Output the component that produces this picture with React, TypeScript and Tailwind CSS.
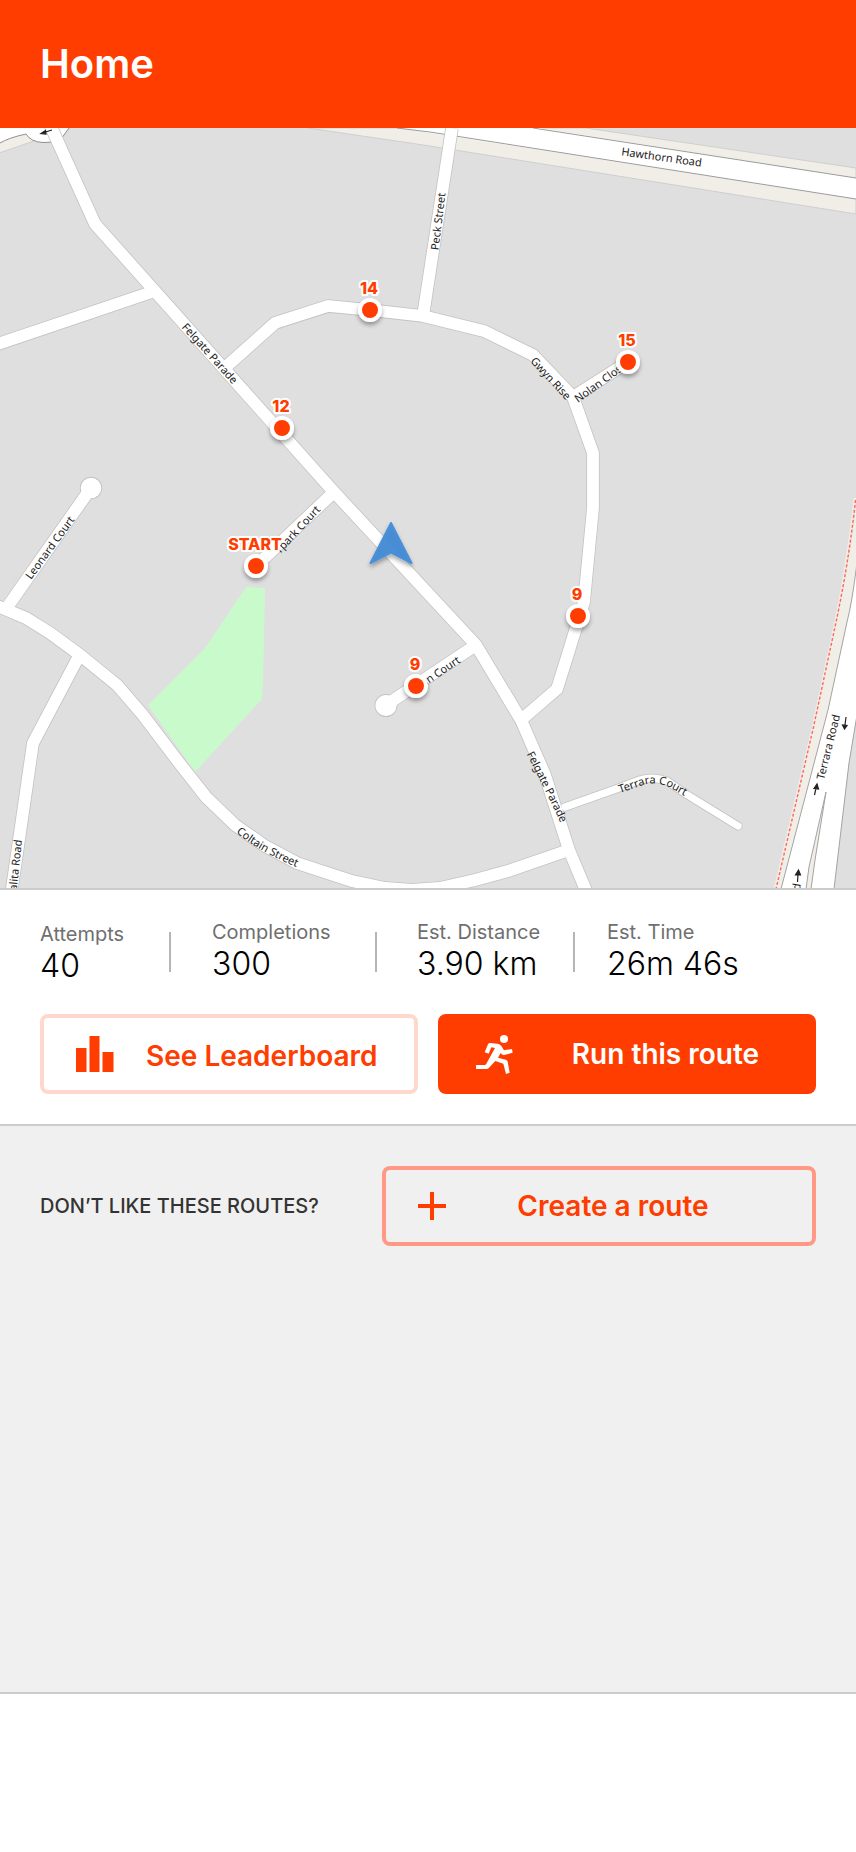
import { MdAdd } from "react-icons/md";

type Pin = { x: number; y: number; label: string };

const pins: Pin[] = [
  { x: 370, y: 310, label: "14" },
  { x: 628, y: 362, label: "15" },
  { x: 282, y: 428, label: "12" },
  { x: 256, y: 566, label: "START" },
  { x: 578, y: 616, label: "9" },
  { x: 416, y: 686, label: "9" },
];

const roads: string[] = [
  "M48 120 L57 140 L95 224 L334 492 L476 645 L521 720 L545 775 L569 850 L590 900",
  "M152 292 L-5 345",
  "M228 365 L275 323 L328 306 L370 310 L423 316 L484 331 L533 355 L573 397 L593 453 L593 508 L584 602 L567 657 L557 689 L521 720",
  "M452 128 L423 316",
  "M573 397 L628 362",
  "M334 492 L256 566",
  "M8 606 L91 488",
  "M-5 605 L26 618 L50 633 L80 655 L117 685 L142 714 L180 764 L206 797 L235 825 L265 846 L297 863 L352 881 L385 888 L412 890 L440 888 L475 880 L508 871 L569 850",
  "M79 656 L33 743 L11 895",
  "M476 645 L386 705",
];

const courtRoad = "M565 807 L616 789 L640 780 Q653 776 667 781 L686 794 L738 826";

function StreetMap() {
  return (
    <svg
      viewBox="0 128 856 760"
      className="block w-full bg-[#dfdfdf]"
      role="img"
      aria-label="Route map"
    >
      <defs>
        <filter id="pin-shadow" x="-50%" y="-50%" width="200%" height="220%">
          <feDropShadow dx="0" dy="3" stdDeviation="2" floodColor="#000" floodOpacity="0.35" />
        </filter>
        <path id="coltain" d="M234 831 Q261 853 299 868" />
        <path id="terrara-court" d="M614 795 L640 786 Q653 781 667 786 L690 799" />
        <path id="felgate-south" d="M525 751 Q547 793 562 826" />
      </defs>

      {/* Hawthorn Road with its verges */}
      <path d="M308 128 L586 128 L856 168 L856 214 L430 146Z" fill="#f1eee8" stroke="#cfcfcf" />
      <path d="M397 127 L533 127 L856 178 L856 199 L430 133Z" fill="#fff" />
      <path d="M533 128 L856 178 M397 128 L430 132 L856 199" fill="none" stroke="#9b9b9b" />

      {/* Roundabout */}
      <path d="M-1 128 L-1 153 L34 141 L40 128Z" fill="#f1eee8" stroke="#cfcfcf" />
      <path d="M0 128 L0 143 Q8 138 26 134 Q31 142 43 142.5 Q60 143 64 135 L69 128Z" fill="#fff" />
      <path d="M0 143 Q8 138 26 134 Q31 142 43 142.5 Q60 143 64 135 L69 128" fill="none" stroke="#8f8f8f" />

      {/* Terrara Road */}
      <path d="M857 498 Q850 560 837 620 L814 727 L776 889 L857 889Z" fill="#f1eee8" />
      <path d="M857 563 Q852 603 847 622 L828 710 L781 889 L834 889 L849 763 L857 715Z" fill="#fff" />
      <path d="M857 563 Q852 603 847 622 L828 710 L781 889" fill="none" stroke="#a3a3a3" />
      <path d="M834 889 L849 763 L857 715 V889Z" fill="#dfdfdf" stroke="#a3a3a3" />
      <path d="M826 792 L809 867 L806 889 L811 889 L815 860Z" fill="#f1eee8" stroke="#a3a3a3" />
      <path d="M855 498 Q848 560 836 620 L813 727 L775 889" fill="none" stroke="#f3ece9" strokeWidth="2.5" />
      <path d="M855.5 500 Q849 560 836.5 620 L813.5 727 L776 889" fill="none" stroke="#fa6a58" strokeWidth="1.4" strokeDasharray="3 2" />

      <path
        d="M246 587 L265 588 L263 683 L262 699 L195 772 L148 705 L205 648 L224 620Z"
        fill="#c9facc"
      />

      {/* Road casings first, so the junctions stay open */}
      <g fill="none" stroke="#c3c3c3" strokeWidth="13.4">
        {roads.map((d) => (
          <path key={d} d={d} />
        ))}
        <path d={courtRoad} strokeWidth="9" strokeLinecap="round" />
      </g>
      <circle cx="91" cy="488" r="11.2" fill="#c3c3c3" />
      <circle cx="386" cy="705.5" r="11.5" fill="#c3c3c3" />
      <g fill="none" stroke="#fff" strokeWidth="11.8">
        {roads.map((d) => (
          <path key={d} d={d} />
        ))}
        <path d={courtRoad} strokeWidth="7.3" strokeLinecap="round" />
      </g>
      <circle cx="91" cy="488" r="10.3" fill="#fff" />
      <circle cx="386" cy="705.5" r="10.6" fill="#fff" />

      {/* Street names */}
      <g className="font-['Noto_Sans',sans-serif] text-[11px]" fill="#222" textAnchor="middle">
        <text transform="translate(661 161) rotate(8)">Hawthorn Road</text>
        <text transform="translate(442 222) rotate(-83)">Peck Street</text>
        <text transform="translate(548 381) rotate(47)">Gwyn Rise</text>
        <text transform="translate(578 403) rotate(-36)" textAnchor="start">Nolan Close</text>
        <text transform="translate(207 356) rotate(48)">Felgate Parade</text>
        <text transform="translate(321 510) rotate(-47)" textAnchor="end">Ypark Court</text>
        <text transform="translate(53 550) rotate(-54)">Leonard Court</text>
        <text transform="translate(461 662) rotate(-34)" textAnchor="end">Corin Court</text>
        <text transform="translate(22 840) rotate(-84)" textAnchor="end">Nalita Road</text>
        <text transform="translate(832 748) rotate(-76)">Terrara Road</text>
        <text transform="translate(801 884) rotate(-80)" textAnchor="end">Terrara Road</text>
        <text><textPath href="#coltain" startOffset="50%">Coltain Street</textPath></text>
        <text><textPath href="#terrara-court" startOffset="50%">Terrara Court</textPath></text>
        <text><textPath href="#felgate-south" startOffset="50%">Felgate Parade</textPath></text>
      </g>

      {/* One-way arrows */}
      <g fill="#222" stroke="#222" strokeWidth="1.2">
        <path d="M52 130 L44 132.5 M41 133.5 L45.5 130.5 L46 134Z" />
        <path d="M814.5 795 L816 788 M817 784 L814 788.5 L818.5 789Z" />
        <path d="M846 717 L845 725 M844.5 729 L842.5 725 L847 725.5Z" />
        <path d="M797.5 882 L798 874 M798.5 870 L795.5 875 L800.5 875Z" />
      </g>

      <path
        d="M391 523 L411.5 563 L391 552.5 L370.5 563Z"
        fill="#3f8ad6"
        fillOpacity="0.92"
        stroke="#4a90d9"
        strokeWidth="2"
        strokeLinejoin="round"
        filter="url(#pin-shadow)"
      />

      {pins.map(({ x, y, label }) => (
        <g key={`${x}-${y}`}>
          <circle cx={x} cy={y} r="12" fill="#fff" filter="url(#pin-shadow)" />
          <circle cx={x} cy={y} r="8" fill="#ff3d00" />
          <text
            x={x - 1}
            y={y - 16}
            textAnchor="middle"
            className="font-['Inter',sans-serif] text-[16px] font-extrabold"
            fill="#ff3d00"
            stroke="#fff"
            strokeWidth="4"
            strokeLinejoin="round"
            paintOrder="stroke"
          >
            {label}
          </text>
        </g>
      ))}
    </svg>
  );
}

function RunnerIcon() {
  return (
    <svg viewBox="0 0 111 117" className="h-[39px] w-[37px] shrink-0" fill="currentColor" aria-hidden="true">
      <circle cx="84" cy="12" r="12" />
      <path d="M26 52 L36 28 Q38 24 42 24 L64 26 Q72 27 76 33 L84 46 L108 42 L110 53 L84 60 Q80 61 77 57 L74 54 L66 68 L89 74 Q94 76 95 80 L101 113 L90 117 L82 86 L58 78 L39 98 Q36 102 31 102 H0 V90 H26 Q29 90 31 86 L57 39 L46 37 L38 56Z" />
    </svg>
  );
}

function Stat({ label, value }: { label: string; value: string }) {
  return (
    <div className="flex flex-col whitespace-nowrap">
      <dt className="text-[20px] leading-6 text-[#6f6f6f]">{label}</dt>
      <dd className="text-[32px] leading-10 font-light text-black">{value}</dd>
    </div>
  );
}

function Divider() {
  return <div className="mt-3 h-10 w-0.5 bg-[#b5b5b5]" />;
}

export default function App() {
  return (
    <div className="min-h-screen bg-white font-['Inter',sans-serif]">
      <header className="flex h-32 items-center bg-[#ff3d00] px-10">
        <h1 className="text-[40px] leading-[48px] font-semibold text-white">Home</h1>
      </header>

      <main>
        <section className="border-b-2 border-[#cccccc]">
          <StreetMap />
        </section>

        <section className="border-b-2 border-[#cccccc] px-10 pt-[30px] pb-[30px]">
          <dl className="grid h-[94px] grid-cols-[129px_2px_1fr] items-start">
            <div className="pt-0.5"><Stat label="Attempts" value="40" /></div>
            <Divider />
            <div className="grid grid-cols-[163px_2px_196px_2px_1fr] pl-[41px]">
              <Stat label="Completions" value="300" />
              <Divider />
              <div className="pl-10"><Stat label="Est. Distance" value="3.90 km" /></div>
              <Divider />
              <div className="pl-8"><Stat label="Est. Time" value="26m 46s" /></div>
            </div>
          </dl>

          <div className="grid grid-cols-2 gap-5">
            <button className="flex h-20 items-center rounded-lg border-4 border-[#ffd8cd] px-8 text-[28px] font-semibold text-[#ff3d00]">
              <svg viewBox="0 0 38 36" className="h-9 w-[38px] shrink-0" fill="currentColor" aria-hidden="true">
                <path d="M0 12h10.5v24H0zM13.5 0h10v36h-10zM26.5 16h11v20h-11z" />
              </svg>
              <span className="flex-1 pt-1 pl-8 text-left whitespace-nowrap">See Leaderboard</span>
            </button>
            <button className="flex h-20 items-center rounded-lg bg-[#ff3d00] px-[38px] text-[28px] font-semibold text-white">
              <RunnerIcon />
              <span className="flex-1 pl-10 text-center whitespace-nowrap">Run this route</span>
            </button>
          </div>
        </section>

        <section className="flex h-[568px] items-start gap-10 border-b-2 border-[#cccccc] bg-[#f0f0f0] px-10 pt-10">
          <p className="flex h-20 shrink-0 items-center text-[20px] font-medium text-[#333333]">
            DON’T LIKE THESE ROUTES?
          </p>
          <button className="ml-auto flex h-20 w-[434px] items-center rounded-lg border-4 border-[#ff9985] px-[22px] text-[28px] font-semibold text-[#ff3d00]">
            <MdAdd className="size-12 shrink-0" aria-hidden="true" />
            <span className="flex-1 pr-5 text-center whitespace-nowrap">Create a route</span>
          </button>
        </section>
      </main>
    </div>
  );
}
